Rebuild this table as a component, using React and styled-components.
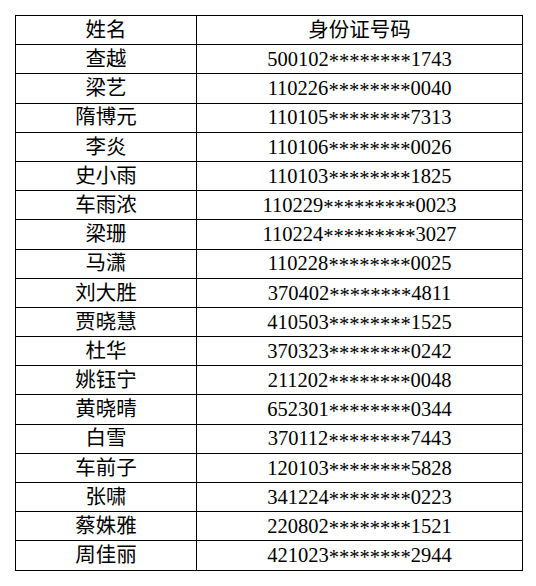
import React from 'react';
import styled, { createGlobalStyle } from 'styled-components';

const GlobalStyle = createGlobalStyle`
  html, body {
    margin: 0;
    padding: 0;
    background: #fff;
  }
`;

const Page = styled.div`
  padding: 15px 0 0 15px;
`;

const Table = styled.table`
  border-collapse: collapse;
  width: 508px;
  font-family: "Liberation Serif", "Noto Sans CJK SC", serif;
  font-size: 20.5px;
  color: #000;
  th, td {
    border: 1px solid #000;
    height: 28.2px;
    padding: 0;
    text-align: center;
    vertical-align: middle;
    font-weight: normal;
    line-height: 1;
  }
  th:first-child, td:first-child {
    width: 180px;
  }
`;

// masked digits: serif asterisks sit high, the reference has them centred
const Mask = styled.span`
  position: relative;
  top: 0.1em;
`;

const rows = [
  ['查越', '500102', 8, '1743'],
  ['梁艺', '110226', 8, '0040'],
  ['隋博元', '110105', 8, '7313'],
  ['李炎', '110106', 8, '0026'],
  ['史小雨', '110103', 8, '1825'],
  ['车雨浓', '110229', 9, '0023'],
  ['梁珊', '110224', 9, '3027'],
  ['马潇', '110228', 8, '0025'],
  ['刘大胜', '370402', 8, '4811'],
  ['贾晓慧', '410503', 8, '1525'],
  ['杜华', '370323', 8, '0242'],
  ['姚钰宁', '211202', 8, '0048'],
  ['黄晓晴', '652301', 8, '0344'],
  ['白雪', '370112', 8, '7443'],
  ['车前子', '120103', 8, '5828'],
  ['张啸', '341224', 8, '0223'],
  ['蔡姝雅', '220802', 8, '1521'],
  ['周佳丽', '421023', 8, '2944'],
];

const App = () => {
  return (
    <Page>
      <GlobalStyle />
      <Table>
        <thead>
          <tr>
            <th>姓名</th>
            <th>身份证号码</th>
          </tr>
        </thead>
        <tbody>
          {rows.map(([name, head, stars, tail]) => (
            <tr key={name}>
              <td>{name}</td>
              <td>
                {head}
                <Mask>{'*'.repeat(stars)}</Mask>
                {tail}
              </td>
            </tr>
          ))}
        </tbody>
      </Table>
    </Page>
  );
};

export default App;
